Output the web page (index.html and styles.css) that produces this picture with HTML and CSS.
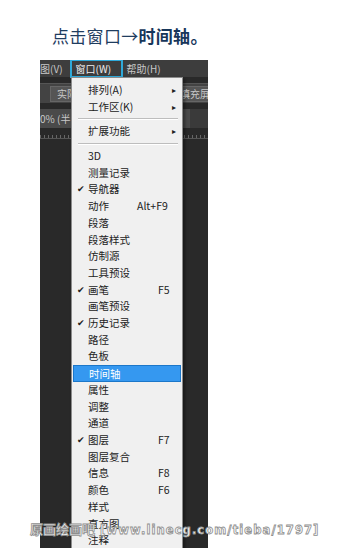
FILE: index.html
```html
<!DOCTYPE html>
<html lang="zh">
  <head>
    <link rel="stylesheet" href="styles.css">
  </head>
  <body>
    <h1 class="title">点击窗口→<b>时间轴。</b></h1>

    <div class="shot">
      <div class="menubar">
        <span class="mb-item cut">视图(V)</span>
        <span class="mb-item active">窗口(W)</span>
        <span class="mb-item">帮助(H)</span>
      </div>
      <div class="optbar">
        <span class="btn">实际</span>
        <span class="btn right">填充屏</span>
      </div>
      <div class="docbar">
        <span class="tab">0% (半</span>
      </div>
      <div class="ruler"></div>

      <!-- window menu -->
      <div class="menu">
        <div class="row">排列(A)<span class="arrow">▸</span></div>
        <div class="row">工作区(K)<span class="arrow">▸</span></div>
        <div class="sep"></div>
        <div class="row">扩展功能<span class="arrow">▸</span></div>
        <div class="sep"></div>
        <div class="row">3D</div>
        <div class="row">测量记录</div>
        <div class="row checked">导航器</div>
        <div class="row">动作<span class="key">Alt+F9</span></div>
        <div class="row">段落</div>
        <div class="row">段落样式</div>
        <div class="row">仿制源</div>
        <div class="row">工具预设</div>
        <div class="row checked">画笔<span class="key far">F5</span></div>
        <div class="row">画笔预设</div>
        <div class="row checked">历史记录</div>
        <div class="row">路径</div>
        <div class="row">色板</div>
        <div class="row hover">时间轴</div>
        <div class="row">属性</div>
        <div class="row">调整</div>
        <div class="row">通道</div>
        <div class="row checked">图层<span class="key far">F7</span></div>
        <div class="row">图层复合</div>
        <div class="row">信息<span class="key far">F8</span></div>
        <div class="row">颜色<span class="key far">F6</span></div>
        <div class="row">样式</div>
        <div class="row">直方图</div>
        <div class="row">注释</div>
      </div>
    </div>

    <div class="watermark"><span class="wm-cn">原画绘画吧</span> [www.linecg.com/tieba/1797]</div>
  </body>
</html>
```

FILE: styles.css
```css
body {
  margin: 0;
  background: #fff;
  font-family: "Noto Sans CJK SC", "Liberation Sans", sans-serif;
  position: relative;
  height: 548px;
  overflow: hidden;
}

.title {
  margin: 0;
  padding: 25px 0 0 52px;
  font-size: 17px;
  line-height: 22px;
  font-weight: normal;
  color: #1f3d5f;
  letter-spacing: 0.3px;
}

.title b {
  font-weight: bold;
  color: #17365a;
}

.shot {
  position: relative;
  margin: 13px 0 0 40px;
  width: 168px;
  height: 500px;
  background: #292929;
  overflow: hidden;
  font-size: 10px;
  color: #c8c8c8;
}

.menubar {
  display: flex;
  height: 17px;
  align-items: center;
  background: #3d3d3d;
}

.mb-item {
  padding: 0 4px;
  line-height: 15px;
  white-space: nowrap;
}

.mb-item.cut {
  margin-left: -14px;
}

.mb-item.active {
  margin-left: 3px;
  width: 41px;
  border: 2px solid #2fa9d9;
  color: #eee;
}

.optbar {
  display: flex;
  justify-content: space-between;
  height: 19px;
  margin-top: 6px;
  background: #434343;
  align-items: center;
  border-top: 1px solid #555;
}

.btn {
  margin-left: 10px;
  padding: 0 6px;
  background: #555;
  border: 1px solid #666;
  line-height: 14px;
  white-space: nowrap;
}

.btn.right {
  margin-right: -6px;
  padding: 0 3px;
}

.docbar {
  display: flex;
  height: 19px;
  margin-top: 6px;
  background: #3a3a3a;
  align-items: center;
}

.tab {
  padding: 0 120px 0 0;
  background: #4a4a4a;
  line-height: 19px;
  white-space: nowrap;
}

.ruler {
  height: 6px;
  margin-top: 4px;
  border-bottom: 1px solid #555;
  background: repeating-linear-gradient(90deg, #666 0 1px, transparent 1px 4px);
  background-size: 100% 3px;
  background-repeat: no-repeat;
  background-position: bottom;
}

.menu {
  position: absolute;
  top: 17px;
  left: 31px;
  width: 110px;
  height: 500px;
  padding-top: 4px;
  background: #f0f0f0;
  border: 1px solid #8c8c8c;
  box-shadow: 2px 2px 3px rgba(0, 0, 0, 0.4);
  color: #222;
  font-size: 10.5px;
}

.row {
  position: relative;
  height: 16.7px;
  line-height: 16.7px;
  padding-left: 16px;
  white-space: nowrap;
}

.row.checked::before {
  content: "✔";
  position: absolute;
  left: 5px;
  font-size: 9px;
}

.row.hover {
  margin: 0 1px;
  padding-left: 15px;
  height: 15px;
  line-height: 15px;
  background: #3598f0;
  border: 1px solid #1c77c9;
  color: #fff;
}

.key {
  position: absolute;
  left: 65px;
}

.key.far {
  left: 86px;
}

.arrow {
  position: absolute;
  right: 6px;
  font-size: 8px;
}

.sep {
  height: 1px;
  margin: 3px 4px 3px 6px;
  background: #bdbdbd;
  border-bottom: 1px solid #fff;
}

.watermark {
  position: absolute;
  left: 30px;
  top: 520px;
  font-family: "DejaVu Sans", "Noto Sans CJK SC", sans-serif;
  font-size: 11.5px;
  font-weight: bold;
  line-height: 18px;
  color: #fff;
  -webkit-text-stroke: 0.8px #8e8e8e;
  white-space: nowrap;
  letter-spacing: 1.1px;
}

.wm-cn {
  font-family: "Noto Sans CJK SC", sans-serif;
  font-size: 13px;
  letter-spacing: 0;
}
```
